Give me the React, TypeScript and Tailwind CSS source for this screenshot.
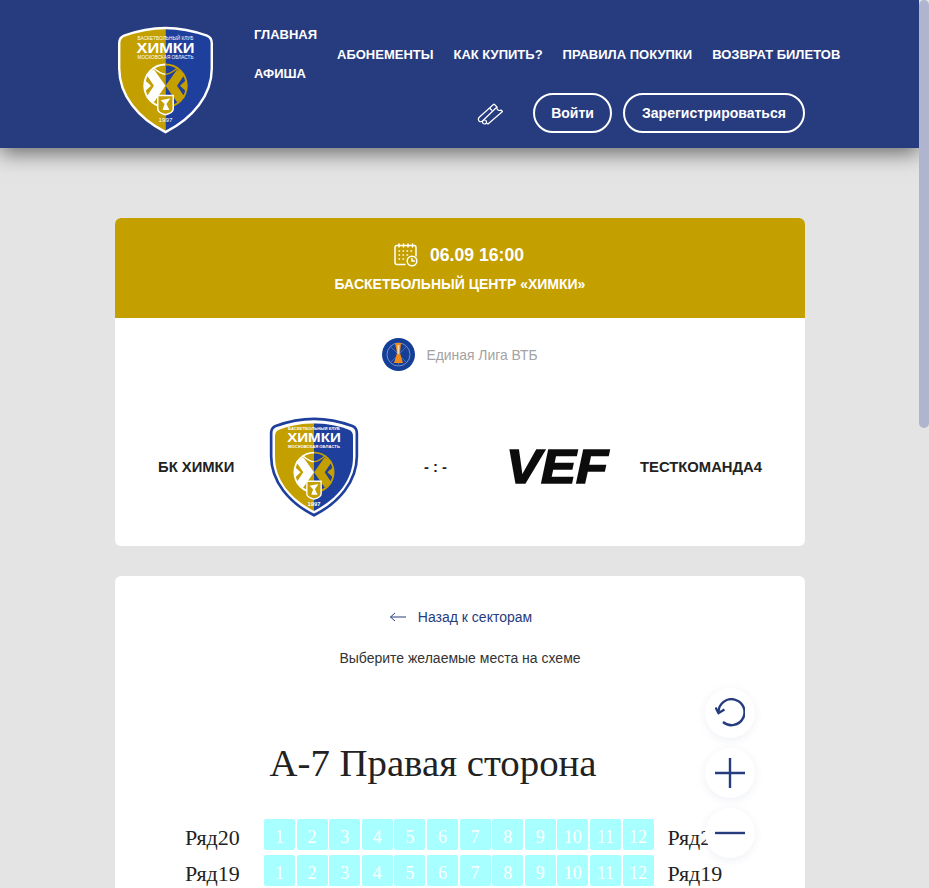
const SEATS = [1, 2, 3, 4, 5, 6, 7, 8, 9, 10, 11, 12]
const NAV = ['АБОНЕМЕНТЫ', 'КАК КУПИТЬ?', 'ПРАВИЛА ПОКУПКИ', 'ВОЗВРАТ БИЛЕТОВ']

const SHIELD =
  'M50 2 C66 2 82 6 93 10 Q98 12 98 18 L98 44 C98 72 78 96 50 110 C22 96 2 72 2 44 L2 18 Q2 12 7 10 C18 6 34 2 50 2 Z'

function KhimkiLogo({ className, id, border }: { className: string; id: string; border: string }) {
  const outlined = border !== '#ffffff'
  return (
    <svg viewBox="0 0 100 112" className={className}>
      <defs>
        <clipPath id={id}>
          <path d={SHIELD} />
        </clipPath>
      </defs>
      <path d={SHIELD} fill="#fff" />
      <g transform={outlined ? 'translate(50 56) scale(0.91) translate(-50 -56)' : undefined}>
        <g clipPath={`url(#${id})`}>
          <rect x="0" y="0" width="50" height="112" fill="#c49f00" />
          <rect x="50" y="0" width="50" height="112" fill="#1f3f9d" />
        </g>
      </g>
      <path d={SHIELD} fill="none" stroke={border} strokeWidth={outlined ? 3 : 2.5} />
      <g fill="#fff" fontFamily="Liberation Sans, sans-serif">
        <text x="21" y="15" fontSize="4.6" textLength="58" lengthAdjust="spacingAndGlyphs">БАСКЕТБОЛЬНЫЙ КЛУБ</text>
        <text x="20" y="28.5" fontSize="14.5" fontWeight="700" textLength="60" lengthAdjust="spacingAndGlyphs">ХИМКИ</text>
        <text x="21" y="34.5" fontSize="4.6" textLength="58" lengthAdjust="spacingAndGlyphs">МОСКОВСКАЯ ОБЛАСТЬ</text>
        <text x="50" y="100" fontSize="6.5" textAnchor="middle">1997</text>
      </g>
      {/* мяч */}
      <path d="M50 40 A22 22 0 0 0 50 84" fill="none" stroke="#fff" strokeWidth="2" />
      <path d="M50 40 A22 22 0 0 1 50 84" fill="none" stroke="#c49f00" strokeWidth="2" />
      <path d="M37 43 Q45 50 50 50" fill="none" stroke="#fff" strokeWidth="1.5" />
      <path d="M63 43 Q55 50 50 50" fill="none" stroke="#c49f00" strokeWidth="1.5" />
      <path d="M30 50 L38 45 L50 62 L38 79 L30 74 L38 62 Z" fill="#fff" />
      <path d="M28.5 56 L35 62 L28.5 68 Z" fill="#fff" />
      <path d="M70 50 L62 45 L50 62 L62 79 L70 74 L62 62 Z" fill="#c49f00" />
      <path d="M71.5 56 L65 62 L71.5 68 Z" fill="#c49f00" />
      {/* герб */}
      <path d="M42 72 L58 72 L58 86 Q58 90 50 92 Q42 90 42 86 Z" fill="#c49f00" stroke="#fff" strokeWidth="1.5" />
      <path d="M45 77 L55 75 L51 81 L54 87 L47 87 L49 81 Z" fill="#fff" />
    </svg>
  )
}

function TicketIcon() {
  return (
    <svg viewBox="0 0 26 22" className="mt-[2px] h-[22px] w-[26px]" fill="none" stroke="#fff" strokeWidth="1.2" strokeLinejoin="round">
      <path d="M17 1 L20 4 Q19.5 6 21 7 Q22.5 8 24 7 L25.5 8.5 L11 21 L9.5 20" />
      <path d="M17 1 L2.5 14 Q0.5 16 2 18 Q3.5 19.5 5.5 18 L20 4" />
      <path d="M12.5 5 L15 7.5" />
      <circle cx="7.5" cy="19" r="2" />
    </svg>
  )
}

function CalendarIcon() {
  return (
    <svg viewBox="0 0 24 24" className="h-6 w-6" fill="none" stroke="#fff" strokeWidth="1.5" strokeLinecap="round">
      <path d="M11 21.5 H3 Q1 21.5 1 19.5 V4.5 Q1 2.5 3 2.5 H20 Q22 2.5 22 4.5 V13" />
      <path d="M5 1 V4 M9.5 1 V4 M14 1 V4 M18.5 1 V4" />
      <path d="M5 8 H5.5 M9 8 H9.5 M13 8 H13.5 M17 8 H17.5 M5 12 H5.5 M9 12 H9.5 M13 12 H13.5 M5 16 H5.5 M9 16 H9.5" />
      <circle cx="18" cy="18" r="4.8" />
      <path d="M18 15.5 V18 H20.5" />
    </svg>
  )
}

function LeagueLogo() {
  return (
    <svg viewBox="0 0 33 33" className="h-[33px] w-[33px]">
      <circle cx="16.5" cy="16.5" r="16.5" fill="#153e97" />
      <circle cx="16.5" cy="16.5" r="11.5" fill="none" stroke="#8fa6d8" strokeWidth="0.8" />
      <path d="M9 24 L24 9 M9 9 L24 24 M16.5 6 V27" stroke="#6f8ccb" strokeWidth="0.6" />
      <path d="M13 5 L19 5 L18 15 L21 25 L12 25 L15 15 Z" fill="#f18a1d" />
      <path d="M15.5 7 L17.5 7 L17 16 L15.5 16 Z" fill="#f9d9a8" />
    </svg>
  )
}

function VefLogo() {
  return (
    <svg viewBox="0 0 100 36" className="h-[36px] w-[100px] overflow-visible">
      <text
        x="-2"
        y="34"
        textLength="102"
        lengthAdjust="spacingAndGlyphs"
        fontSize="48"
        fontWeight="700"
        fontStyle="italic"
        fontFamily="Liberation Sans, sans-serif"
        fill="#0c0c0c"
        stroke="#0c0c0c"
        strokeWidth="1.6"
      >
        VEF
      </text>
    </svg>
  )
}

function SeatRow({ row }: { row: number }) {
  return (
    <div className="flex h-[36px] items-start">
      <div className="w-[149px] pt-[5px] pl-[70px] font-['Liberation_Serif',serif] text-[22px] leading-[28px] text-[#222]">Ряд{row}</div>
      <div className="flex gap-[1.6px]">
        {SEATS.map((n) => (
          <div
            key={n}
            className="flex h-[31px] w-[31px] items-center justify-center rounded-[2px] bg-[#a8ffff] pt-[5px] font-['Liberation_Serif',serif] text-[18px] text-white"
          >
            {n}
          </div>
        ))}
      </div>
      <div className="ml-[14px] pt-[5px] font-['Liberation_Serif',serif] text-[22px] leading-[28px] text-[#222]">Ряд{row}</div>
    </div>
  )
}

function RoundButton({ children }: { children: React.ReactNode }) {
  return (
    <div className="flex h-[50px] w-[50px] items-center justify-center rounded-full bg-white shadow-[0_2px_10px_rgba(39,60,127,0.08)]">
      {children}
    </div>
  )
}

export default function App() {
  return (
    <div className="flex h-[888px] overflow-hidden bg-[#e4e4e4] font-['Liberation_Sans',sans-serif]">
      <div className="w-[919px] shrink-0">
        <header className="flex h-[148px] bg-[#273c7f] pl-[115px] shadow-[0_5px_20px_rgba(0,0,0,0.55)]">
          <div className="w-[139px] pt-[26px] pl-[2px]">
            <KhimkiLogo className="h-[108px] w-[97px]" id="shield-top" border="#ffffff" />
          </div>
          <div className="flex flex-col">
            <nav className="flex items-center pt-[27px] text-[13px] font-bold text-white">
              <div className="flex w-[83px] flex-col gap-[23px]">
                <span className="leading-[16px]">ГЛАВНАЯ</span>
                <span className="leading-[16px]">АФИША</span>
              </div>
              <div className="flex gap-[20px]">
                {NAV.map((item) => (
                  <span key={item}>{item}</span>
                ))}
              </div>
            </nav>
            <div className="mt-[11px] flex items-center pl-[223px]">
              <TicketIcon />
              <button className="ml-[30px] h-[40px] w-[79px] rounded-full border-2 border-white text-[14px] font-bold text-white">
                Войти
              </button>
              <button className="ml-[11px] h-[40px] w-[182px] rounded-full border-2 border-white text-[14px] font-bold text-white">
                Зарегистрироваться
              </button>
            </div>
          </div>
        </header>

        <main className="mx-[115px] mt-[70px] w-[690px]">
          <section className="overflow-hidden rounded-[6px] bg-white">
            <div className="flex h-[100px] flex-col items-center bg-[#c49f00] pt-[24px] font-bold text-white">
              <div className="flex items-center gap-[12px] pr-[2px] text-[17.6px] leading-[26px]">
                <CalendarIcon />
                <span>06.09 16:00</span>
              </div>
              <div className="mt-[6px] text-[14px] leading-[20px]">БАСКЕТБОЛЬНЫЙ ЦЕНТР «ХИМКИ»</div>
            </div>
            <div className="flex h-[228px] flex-col">
              <div className="mt-[20px] flex items-center justify-center gap-[11px] text-[13.9px] text-[#a3a3a3]">
                <LeagueLogo />
                <span className="pt-[1px]">Единая Лига ВТБ</span>
              </div>
              <div className="mt-[46px] flex items-center text-[14.8px] font-bold text-[#222]">
                <span className="w-[154px] pl-[43px]">БК ХИМКИ</span>
                <KhimkiLogo className="h-[100px] w-[90px]" id="shield-game" border="#1f3f9d" />
                <span className="ml-[65px] w-[84px]">- : -</span>
                <div className="w-[132px]">
                  <VefLogo />
                </div>
                <span>ТЕСТКОМАНДА4</span>
              </div>
            </div>
          </section>

          <section className="relative mt-[30px] h-[400px] rounded-[6px] bg-white">
            <div className="flex items-center justify-center gap-[12px] pt-[31px] pl-[2px] text-[14px] leading-[20px] text-[#273c7f]">
              <svg viewBox="0 0 16 10" className="h-[10px] w-[16px]" fill="none" stroke="currentColor" strokeWidth="1">
                <path d="M0.5 5 H16 M5 1 L0.5 5 L5 9" />
              </svg>
              <span>Назад к секторам</span>
            </div>
            <div className="mt-[21px] text-center text-[14px] leading-[20px] text-[#333]">Выберите желаемые места на схеме</div>
            <div className="mt-[73px] pr-[54px] text-center font-['Liberation_Serif',serif] text-[38.8px] leading-[44px] text-[#222]">
              А-7 Правая сторона
            </div>
            <div className="mt-[34px]">
              <SeatRow row={20} />
              <SeatRow row={19} />
            </div>
            <div className="absolute top-[112px] left-[590px] flex flex-col gap-[10px] text-[#273c7f]">
              <RoundButton>
                <svg viewBox="0 0 30 30" className="h-[30px] w-[30px]" fill="none" stroke="currentColor" strokeWidth="2.4">
                  <path d="M3.5 14 A13 13 0 1 1 8 24" />
                  <path d="M0.5 9.5 L3.5 15 L9.5 11.5" />
                </svg>
              </RoundButton>
              <RoundButton>
                <svg viewBox="0 0 30 30" className="h-[30px] w-[30px]" stroke="currentColor" strokeWidth="2.4">
                  <path d="M0 15 H30 M15 0 V30" />
                </svg>
              </RoundButton>
              <RoundButton>
                <svg viewBox="0 0 30 30" className="h-[30px] w-[30px]" stroke="currentColor" strokeWidth="2.4">
                  <path d="M0 15 H30" />
                </svg>
              </RoundButton>
            </div>
          </section>
        </main>
      </div>
      <div className="w-[10px] shrink-0 bg-[#e4e4e4]">
        <div className="h-[428px] rounded-[5px] bg-[#b0b5cf]" />
      </div>
    </div>
  )
}
